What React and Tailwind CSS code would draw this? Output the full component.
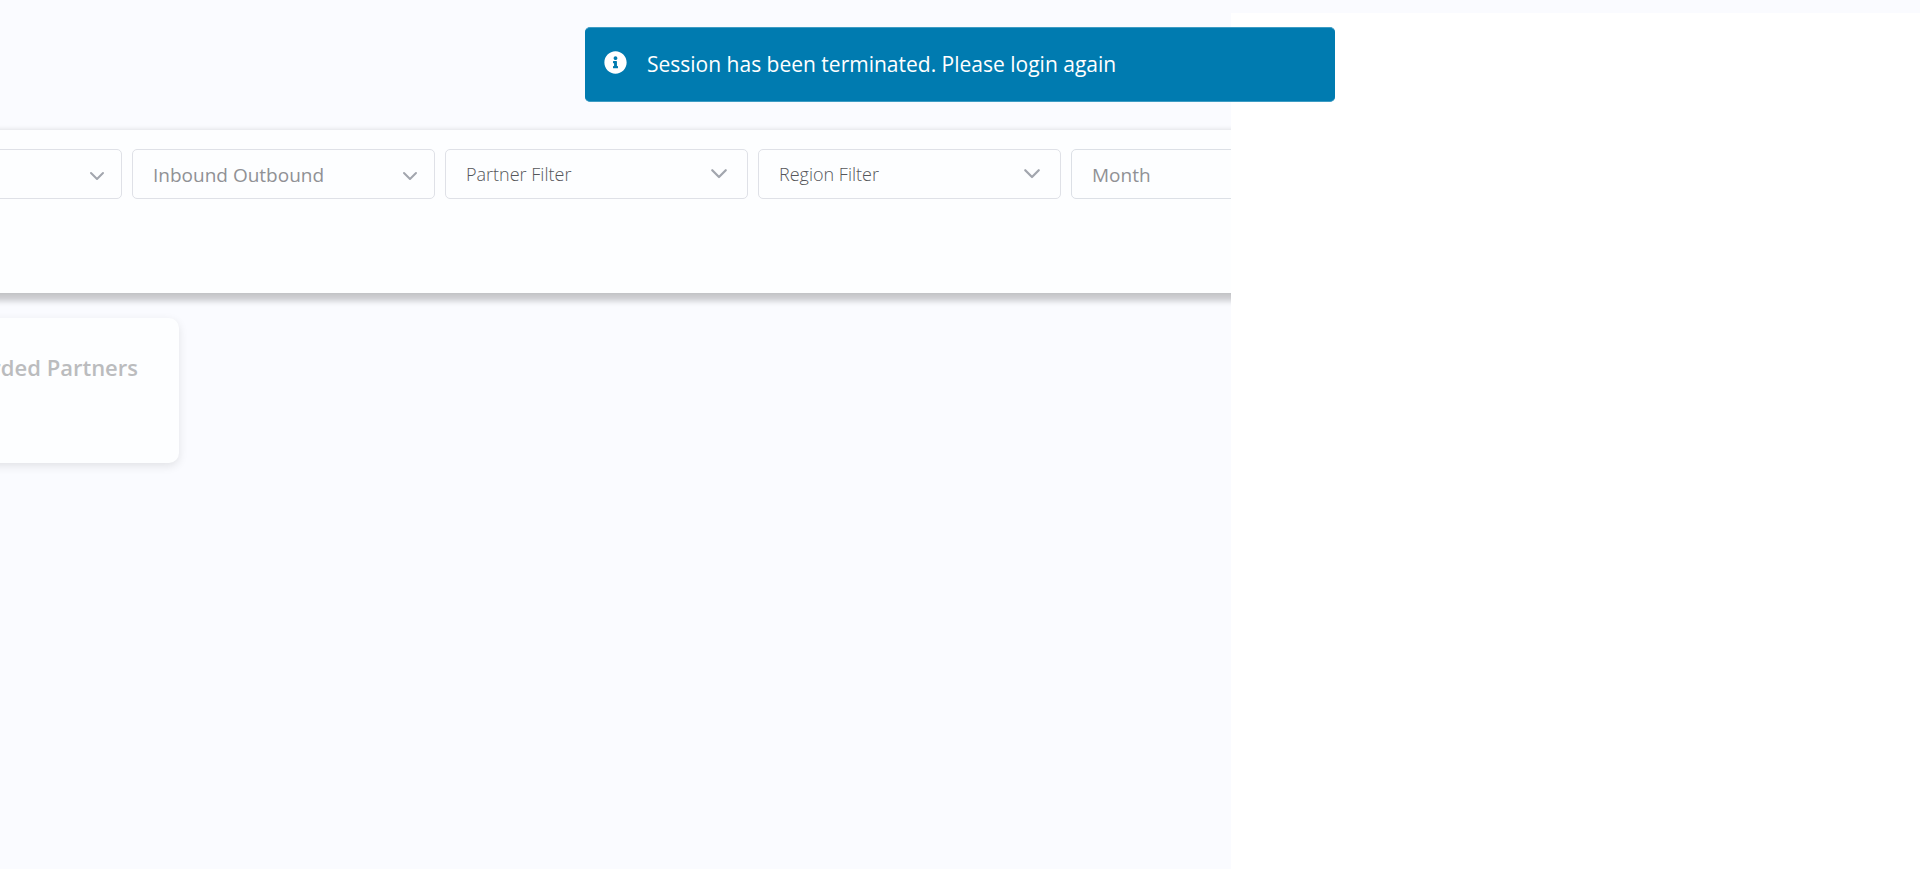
import { FaInfoCircle } from "react-icons/fa";

const filters = [
  { id: "type", label: "", textClass: "pt-0.5 text-[19px] text-[#909195]", chevron: "right-[17px] top-[22px] w-4" },
  { id: "direction", label: "Inbound Outbound", textClass: "pt-0.5 text-[19px] text-[#909195]", chevron: "right-[17px] top-[22px] w-4" },
  { id: "partner", label: "Partner Filter", textClass: "text-[18px] font-light text-[#55565a]", chevron: "right-5 top-[19px] w-[18px]" },
  { id: "region", label: "Region Filter", textClass: "text-[18px] font-light text-[#55565a]", chevron: "right-5 top-[19px] w-[18px]" },
];

function Chevron({ className }) {
  return (
    <svg
      viewBox="0 0 16 10"
      fill="none"
      stroke="#a2a6ae"
      strokeWidth="2"
      strokeLinecap="round"
      strokeLinejoin="round"
      aria-hidden="true"
      className={`pointer-events-none absolute ${className}`}
    >
      <path d="M2 2l6 6 6-6" />
    </svg>
  );
}

function FilterSelect({ id, label, textClass, chevron }) {
  return (
    <div className="relative w-[303px] shrink-0">
      <select
        id={id}
        aria-label={label || id}
        className={`h-[50px] w-full appearance-none rounded-[5px] border border-[#dfe1e7] bg-[#fdfeff] px-5 ${textClass}`}
      >
        <option>{label}</option>
      </select>
      <Chevron className={chevron} />
    </div>
  );
}

export default function App() {
  return (
    <div className="flex min-h-screen flex-col overflow-hidden bg-white font-['Open_Sans','Noto_Sans',sans-serif]">
      <div
        role="alert"
        className="fixed inset-x-0 top-[27px] z-10 mx-auto flex h-[75px] w-[750px] max-w-full items-center gap-5 rounded-[5px] border border-[#3d9cc4] border-x-[#007bb0] bg-[#007bb0] px-[18px] pb-0.5 text-white"
      >
        <FaInfoCircle className="mb-0.5 size-[23px] shrink-0" />
        <p className="text-[21px] leading-8">Session has been terminated. Please login again</p>
      </div>

      <header className="h-[13px] bg-[#fafbff]" />

      <main className="flex w-[64.1%] grow flex-col overflow-hidden bg-[#fafbff] pt-[117px]">
        <section className="-mx-5 h-[163px] shrink-0 bg-[#fdfeff] pt-[19px] shadow-[0_8px_6px_rgba(0,0,0,0.2),0_-1px_4px_rgba(0,0,0,0.1)]">
          <form className="-ml-[161px] flex gap-[10px]">
            {filters.map((filter) => (
              <FilterSelect key={filter.id} {...filter} />
            ))}
            <input
              type="text"
              aria-label="Month"
              placeholder="Month"
              className="h-[50px] w-[303px] shrink-0 rounded-[5px] border border-[#dce0e6] bg-[#fdfeff] px-5 pt-0.5 text-[19px] placeholder:text-[#909195]"
            />
          </form>
        </section>

        <section className="-ml-[220px] mt-[25px] h-[145px] w-[399px] rounded-[10px] bg-[#fdfeff] px-[41px] pt-[31px] shadow-[0_3px_10px_rgba(0,0,0,0.1)]">
          <h2 className="whitespace-nowrap text-right text-[22px] font-semibold leading-9 text-[#bbbcbe]">
            Onboarded Partners
          </h2>
        </section>
      </main>
    </div>
  );
}
